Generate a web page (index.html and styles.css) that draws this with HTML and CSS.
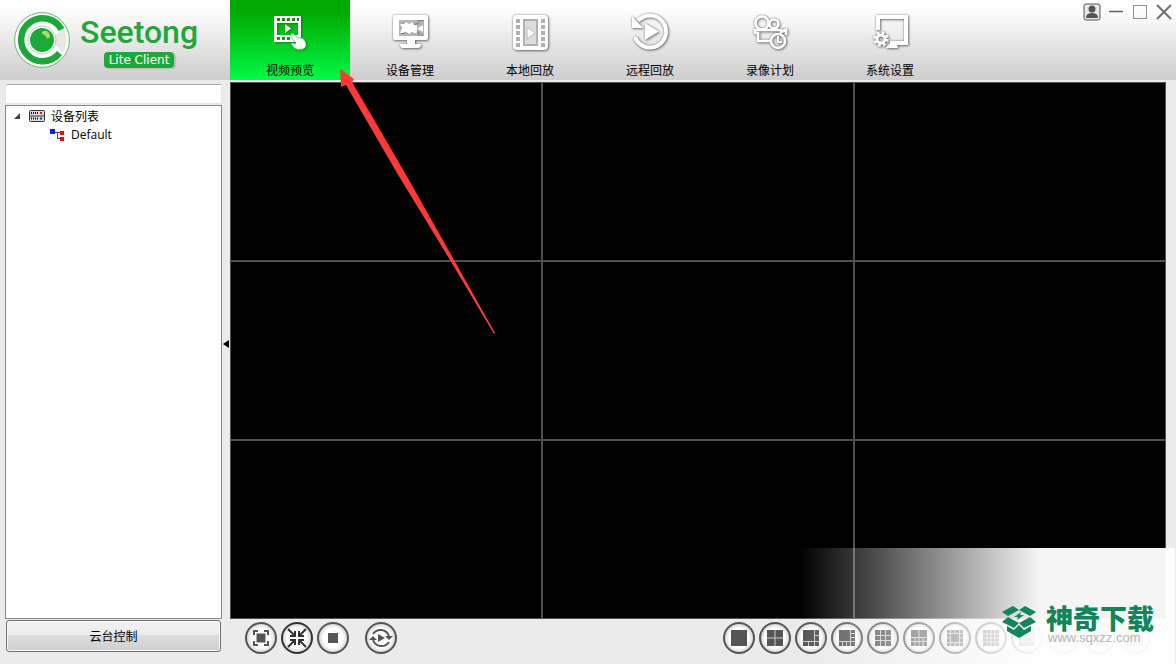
FILE: index.html
```html
<!DOCTYPE html>
<html lang="zh-CN">
<head>
    <meta charset="UTF-8">
    <meta name="viewport" content="width=device-width, initial-scale=1.0">
    <title>Seetong Lite Client</title>
    <link rel="stylesheet" href="styles.css">
</head>
<body>
    <header class="header">
        <div class="brand">
            <svg class="logo" viewBox="0 0 56 56">
                <circle cx="28" cy="28" r="27.4" fill="#fff" stroke="#5dbb6e"/>
                <path d="M38 28 49 15A25 25 0 0 1 49 41Z" fill="#e8e8e8"/>
                <path d="M47.500 17.500A21.500 21.500 0 1 0 45.500 41" fill="none" stroke="#1fa83a" stroke-width="6.500"/>
                <circle cx="28" cy="28" r="14" fill="#fff" stroke="#a5d9ae"/>
                <circle cx="28" cy="28" r="12" fill="#1fa83a"/>
                <path d="M28 20c4-3 8 0 8 5l-3 2c-1-3-2-4-5-5Z" fill="#a5db6d"/>
            </svg>
            <div class="brand-text">
                <span class="brand-name">Seetong</span>
                <span class="brand-tag">Lite Client</span>
            </div>
        </div>
        <nav class="tabs">
            <button class="tab active">
                <svg class="tab-icon" viewBox="0 0 40 40">
                    <path fill-rule="evenodd" d="M4 3h27v26H4ZM7 10v12h21V10ZM7 5v3h3V5ZM12 5v3h3V5ZM17 5v3h3V5ZM22 5v3h3V5ZM27 5v3h2V5ZM7 24v3h3v-3ZM12 24v3h3v-3ZM17 24v3h3v-3Z"/>
                    <path d="M15 11v9l6-4.500Z"/>
                    <path stroke="#00c81e" stroke-width=".6" d="M21 21q1-1.500 3 0l4 4q5-1 7 3 3 6-2 8-5 2-9-1l-3-4q1-2 4 0l1-1-5-6q-1-2 0-3Z"/>
                </svg>
                <span>视频预览</span>
            </button>
            <button class="tab">
                <svg class="tab-icon" viewBox="0 0 40 40">
                    <path fill-rule="evenodd" d="M5 2h31q2 0 2 2v21q0 2-2 2H25v4h6q0 4-3 4H13q-3 0-3-4h7v-4H5q-2 0-2-2V4q0-2 2-2ZM9 7v16h25V7Z"/>
                    <path fill="#b4b4b4" d="M9 7h19v3h-2l-2 2h-2l-2-2-2 2h-3l-2-2-2 4 2 3-2 4h3l2-2 2 2 3-2 3 1h4v3H9ZM27 12l7-5v16l-7-5Z"/>
                    <path d="M10 11h4l2-2 3 2 3-2 2 3h3v8h-3l-2-1-3 2-3-2-3 1h-3l2-5ZM28 15l5-3v7l-5-3Z"/>
                </svg>
                <span>设备管理</span>
            </button>
            <button class="tab">
                <svg class="tab-icon" viewBox="0 0 40 40">
                    <path fill="#b0b0b0" d="M5 4h31v31H5Z"/>
                    <path fill-rule="evenodd" d="M7 2h27q4 0 4 4v27q0 4-4 4H7q-4 0-4-4V6q0-4 4-4ZM13 6v27h15V6ZM6 6v4h4V6ZM6 12v4h4v-4ZM6 18v4h4v-4ZM6 24v4h4v-4ZM6 30v4h4v-4ZM31 6v4h4V6ZM31 12v4h4v-4ZM31 18v4h4v-4ZM31 24v4h4v-4ZM31 30v4h4v-4Z"/>
                    <path fill="#ddd" d="M15 8h11v23H15Z"/>
                    <path stroke="#999" stroke-width=".6" d="M17 14v12l8-6Z"/>
                </svg>
                <span>本地回放</span>
            </button>
            <button class="tab">
                <svg class="tab-icon" viewBox="0 0 40 40">
                    <path d="M8 8A16 16 0 1 1 5 24" fill="none" stroke="#fff" stroke-width="4"/>
                    <path d="M2 3v12h11ZM15 10v17l14-8.500Z"/>
                </svg>
                <span>远程回放</span>
            </button>
            <button class="tab">
                <svg class="tab-icon" viewBox="0 0 40 40">
                    <g fill="none" stroke="#fff" stroke-width="2.600">
                        <circle cx="12" cy="10" r="6.500"/>
                        <circle cx="24" cy="11" r="4.500"/>
                        <path d="M21 28H8v-8H5v-3h26v2l5-2v5"/>
                        <circle cx="28" cy="28" r="7"/>
                        <path d="M28 23v6h4" stroke-width="2"/>
                    </g>
                </svg>
                <span>录像计划</span>
            </button>
            <button class="tab">
                <svg class="tab-icon" viewBox="0 0 40 40">
                    <path d="M8 17V4h28v26H20" fill="none" stroke="#fff" stroke-width="4"/>
                    <path d="M19 31h8l1 4H16Z"/>
                    <circle cx="11" cy="26" r="4" fill="none" stroke="#fff" stroke-width="3"/>
                    <circle cx="11" cy="26" r="6.200" fill="none" stroke="#fff" stroke-width="3" stroke-dasharray="2.600 2.270"/>
                </svg>
                <span>系统设置</span>
            </button>
        </nav>
        <div class="window-controls">
            <button aria-label="用户">
                <svg viewBox="0 0 18 18"><rect x="1" y="1" width="16" height="16" rx="2" fill="#e8e8e8" stroke="#555"/><circle cx="9" cy="6" r="3.500" fill="#555"/><path d="M3 15q0-5 6-5t6 5Z" fill="#555"/></svg>
            </button>
            <button aria-label="最小化">
                <svg viewBox="0 0 18 18"><path d="M2 8.500h14" stroke="#606060" stroke-width="1.500"/></svg>
            </button>
            <button aria-label="最大化">
                <svg viewBox="0 0 18 18"><rect x="2.500" y="2.500" width="13" height="13" fill="none" stroke="#909090"/></svg>
            </button>
            <button aria-label="关闭">
                <svg viewBox="0 0 18 18"><path d="m2 2 14 14M16 2 2 16" stroke="#707070" stroke-width="2"/></svg>
            </button>
        </div>
    </header>

    <div class="main">
        <aside class="sidebar">
            <input class="search" type="text" aria-label="搜索设备">
            <ul class="tree">
                <li class="tree-row">
                    <svg class="expander" viewBox="0 0 8 8"><path d="M7 1v6H1Z" fill="#444"/></svg>
                    <svg class="device-icon" viewBox="0 0 16 12">
                        <rect x=".5" y=".5" width="15" height="11" rx="1" fill="#ddd" stroke="#333"/>
                        <path d="M0 6h16" stroke="#333"/>
                        <path d="M2 3h8M2 8.500h8" stroke="#111" stroke-width="2" stroke-dasharray="1 1"/>
                        <path d="M11 3h2" stroke="#f00" stroke-width="2"/>
                        <path d="M11 8.500h2" stroke="#03f" stroke-width="2"/>
                    </svg>
                    <span>设备列表</span>
                </li>
                <li class="tree-row child">
                    <svg class="group-icon" viewBox="0 0 14 12">
                        <path d="M4 3.500h6M7.500 3v6.500h3" fill="none" stroke="#444"/>
                        <path d="M0 0h5v5H0Z" fill="#0022d8"/>
                        <path d="M10 2h4v4h-4ZM10 8h4v4h-4Z" fill="#f00"/>
                    </svg>
                    <span>Default</span>
                </li>
            </ul>
            <button class="ptz">云台控制</button>
        </aside>
        <button class="splitter" aria-label="收起">
            <svg viewBox="0 0 6 8"><path d="M6 0v8L0 4Z"/></svg>
        </button>
        <section class="content">
            <div class="video-grid">
                <div></div><div></div><div></div>
                <div></div><div></div><div></div>
                <div></div><div></div><div></div>
            </div>
            <div class="toolbar">
                <div class="tools">
                    <button class="round" aria-label="全屏">
                        <svg viewBox="0 0 16 16"><path d="M3.500 3.500h9v9h-9Z"/><path d="M1 5V1h4M11 1h4v4M15 11v4h-4M5 15H1v-4" fill="none" stroke="#555" stroke-width="2"/></svg>
                    </button>
                    <button class="round dark" aria-label="缩小">
                        <svg viewBox="0 0 20 20"><path d="m1 1 6 6M19 1l-6 6M1 19l6-6M19 19l-6-6M3 8h5V3M12 3v5h5M3 12h5v5M12 17v-5h5" fill="none" stroke="#333" stroke-width="2"/></svg>
                    </button>
                    <button class="round" aria-label="停止">
                        <svg viewBox="0 0 16 16"><path d="M3 3h10v10H3Z"/></svg>
                    </button>
                    <button class="round loop" aria-label="轮巡">
                        <svg viewBox="0 0 24 24"><path d="M4 8a9 9 0 0 1 16 2M20 16a9 9 0 0 1-16-2" fill="none" stroke="#555" stroke-width="2"/><path d="M16 10h8l-4 4ZM0 14h8l-4-4ZM9 8v8l7-4Z"/></svg>
                    </button>
                </div>
                <div class="layouts">
                    <button class="round" aria-label="1画面">
                        <svg viewBox="0 0 16 16"><path d="M0 0h16v16H0Z"/></svg>
                    </button>
                    <button class="round" aria-label="4画面">
                        <svg viewBox="0 0 16 16"><path d="M0 0h16v16H0Z"/><path class="line" d="M8 0v16M0 8h16"/></svg>
                    </button>
                    <button class="round" aria-label="6画面">
                        <svg viewBox="0 0 16 16"><path d="M0 0h16v16H0Z"/><path class="line" d="M11.500 0v16M0 11.500h16M11 5.500h5M5.500 11v5"/></svg>
                    </button>
                    <button class="round" aria-label="8画面">
                        <svg viewBox="0 0 16 16"><path d="M0 0h16v16H0Z"/><path class="line" d="M11.500 0v16M0 11.500h16M11 3.500h5M11 7.500h5M3.500 11v5M7.500 11v5"/></svg>
                    </button>
                    <button class="round" aria-label="9画面">
                        <svg viewBox="0 0 16 16"><path d="M0 0h16v16H0Z"/><path class="line" d="M5.500 0v16M10.500 0v16M0 5.500h16M0 10.500h16"/></svg>
                    </button>
                    <button class="round" aria-label="10画面">
                        <svg viewBox="0 0 16 16"><path d="M0 0h16v16H0Z"/><path class="line" d="M8 0v16M0 7.500h16M0 11.500h16M4 8v8M12 8v8"/></svg>
                    </button>
                    <button class="round" aria-label="13画面">
                        <svg viewBox="0 0 16 16"><path d="M0 0h16v16H0Z"/><path class="line" d="M3.500 0v16M12.500 0v16M0 3.500h16M0 12.500h16M8 0v4M8 12v4M0 8h4M12 8h4"/></svg>
                    </button>
                    <button class="round" aria-label="16画面">
                        <svg viewBox="0 0 16 16"><path d="M0 0h16v16H0Z"/><path class="line" d="M4 0v16M8 0v16M12 0v16M0 4h16M0 8h16M0 12h16"/></svg>
                    </button>
                    <button class="round"><span class="count">25</span></button>
                    <button class="round" aria-label="36画面">
                        <svg viewBox="0 0 16 16"><path d="M0 0h16v16H0Z"/></svg>
                    </button>
                    <button class="round" aria-label="49画面">
                        <svg viewBox="0 0 16 16"><path d="M0 0h16v16H0Z"/></svg>
                    </button>
                    <button class="round" aria-label="64画面">
                        <svg viewBox="0 0 16 16"><path d="M0 0h16v16H0Z"/></svg>
                    </button>
                </div>
            </div>
        </section>
    </div>

    <!-- pointer to the preview tab -->
    <svg class="arrow" viewBox="0 0 155 265">
        <path d="M0 0 14 10 12 13 65 104 114 191 155 264 154 265 110 191 57 104 6 16 1 18Z" fill="#ff3838"/>
    </svg>

    <div class="watermark">
        <svg class="box-logo" viewBox="0 0 34 32">
            <g fill="#12855c">
                <path d="M0 6 11 0 17 4 6 10ZM34 6 23 0 17 4 28 10Z"/>
                <path d="M6 11 17 17 12 22 0 16ZM28 11 17 17 22 22 34 16Z"/>
                <path d="M5 20 12 24 17 19 22 24 29 20V25L17 32 5 25Z"/>
                <path d="m19 6-7 5h4l-1 3 7-5h-4Z"/>
            </g>
        </svg>
        <div class="site">
            <span class="site-name">神奇下载</span>
            <span class="site-url">www.sqxzz.com</span>
        </div>
    </div>
</body>
</html>
```
FILE: styles.css
```css
* {
    box-sizing: border-box;
}
body {
    margin: 0;
    height: 100vh;
    display: flex;
    flex-direction: column;
    overflow: hidden;
    background: #ebebeb;
    color: #000;
    font-family: "Open Sans", "Noto Sans CJK SC", sans-serif;
    font-size: 12px;
}
button {
    font: inherit;
    color: inherit;
    padding: 0;
    border: none;
    background: none;
    cursor: pointer;
}
svg {
    display: block;
}
.header {
    display: flex;
    height: 80px;
    flex-shrink: 0;
    background: linear-gradient(#fff 10%, #cdcdcd);
}
.brand {
    display: flex;
    gap: 10px;
    width: 230px;
    padding: 12px 0 0 14px;
}
.logo {
    width: 56px;
    height: 56px;
}
.brand-text {
    display: flex;
    flex-direction: column;
    align-items: center;
}
.brand-name {
    font-family: Roboto, sans-serif;
    font-size: 32px;
    font-weight: 500;
    line-height: 40px;
    color: #1fa83a;
}
.brand-tag {
    font-family: "DejaVu Sans", sans-serif;
    font-size: 12px;
    line-height: 16px;
    padding: 0 5px;
    border-radius: 4px;
    background: #1fa83a;
    color: #fff;
    box-shadow: 2px 1px 1px #bbb;
}
.tabs {
    display: flex;
}
.tab {
    display: flex;
    flex-direction: column;
    align-items: center;
    width: 120px;
    padding-top: 13px;
    line-height: 16px;
}
.tab.active {
    background: linear-gradient(#00aa00 15%, #00fa46);
}
.tab-icon {
    width: 40px;
    height: 40px;
    margin-bottom: 10px;
    fill: #fff;
    filter: drop-shadow(0 0 1px rgba(0, 0, 0, 0.4)) drop-shadow(1px 1px 1px rgba(0, 0, 0, 0.4));
}
.tab.active .tab-icon {
    filter: drop-shadow(1px 1px 1px rgba(0, 0, 0, 0.3));
}
.window-controls {
    display: flex;
    gap: 6px;
    height: 18px;
    margin: 3px 3px 0 auto;
}
.window-controls svg {
    width: 18px;
    height: 18px;
}
.main {
    display: flex;
    flex: 1;
    min-height: 0;
    padding: 2px 10px 0 5px;
}
.sidebar {
    display: flex;
    flex-direction: column;
    width: 217px;
    padding: 2px 0 12px;
}
.search {
    height: 20px;
    margin-bottom: 1px;
    border: 1px solid #e0e3e8;
    border-top-color: #abadb3;
    border-radius: 2px;
    background: #fff;
}
.tree {
    flex: 1;
    margin: 0;
    padding: 0 7px;
    list-style: none;
    border: 1px solid #828790;
    background: #fff;
}
.tree-row {
    display: flex;
    align-items: center;
    height: 19px;
}
.tree-row.child {
    padding-left: 37px;
    gap: 7px;
}
.expander {
    width: 8px;
    height: 8px;
}
.device-icon {
    width: 16px;
    height: 12px;
    margin: 0 6px 0 8px;
}
.group-icon {
    width: 14px;
    height: 12px;
}
.ptz {
    height: 32px;
    margin: 1px 1px 0;
    border: 1px solid #707070;
    border-radius: 3px;
    background: linear-gradient(#f2f2f2, #ebebeb 45%, #dddddd 46%, #cfcfcf);
    box-shadow: inset 0 0 0 1px #f8f8f8;
}
.splitter {
    width: 8px;
    padding: 0 0 58px 1px;
}
.splitter svg {
    width: 6px;
    height: 8px;
}
.content {
    display: flex;
    flex: 1;
    flex-direction: column;
}
.video-grid {
    display: grid;
    flex: 1;
    grid-template-columns: repeat(3, 1fr);
    grid-template-rows: repeat(3, 1fr);
    gap: 2px;
    border: 1px solid #505050;
    background: #505050;
}
.video-grid div {
    background: #000;
}
.toolbar {
    display: flex;
    justify-content: space-between;
    padding: 3px 15px 10px;
}
.tools, .layouts {
    display: flex;
    gap: 4px;
}
.round {
    display: flex;
    align-items: center;
    justify-content: center;
    width: 32px;
    height: 32px;
    border: 2px solid #555;
    border-radius: 50%;
    background: radial-gradient(#fff 50%, #d5d5d5 72%);
}
.round.dark {
    border-color: #333;
}
.round.loop {
    margin-left: 12px;
}
.round svg {
    width: 16px;
    height: 16px;
    fill: #555;
}
.round.dark svg {
    width: 20px;
    height: 20px;
}
.round.loop svg {
    width: 24px;
    height: 24px;
}
.round .line {
    stroke: #ccc;
}
.count {
    width: 16px;
    line-height: 16px;
    background: #555;
    color: #fff;
}
.arrow {
    position: absolute;
    left: 340px;
    top: 69px;
    width: 155px;
    height: 265px;
    pointer-events: none;
}
.watermark {
    position: absolute;
    right: 1px;
    bottom: 0;
    display: flex;
    justify-content: flex-end;
    gap: 10px;
    width: 375px;
    height: 116px;
    padding: 58px 21px 0 0;
    background: linear-gradient(90deg, rgba(255, 255, 255, 0), rgba(255, 255, 255, 0.96) 64%);
    pointer-events: none;
}
.box-logo {
    width: 34px;
    height: 32px;
}
.site {
    display: flex;
    flex-direction: column;
}
.site-name {
    font-family: "Noto Sans CJK SC", sans-serif;
    font-size: 27px;
    font-weight: 900;
    line-height: 24px;
    color: #12855c;
}
.site-url {
    font-family: "Liberation Sans", sans-serif;
    font-size: 13px;
    line-height: 16px;
    padding-left: 2px;
    color: #b5b5b5;
}
```
